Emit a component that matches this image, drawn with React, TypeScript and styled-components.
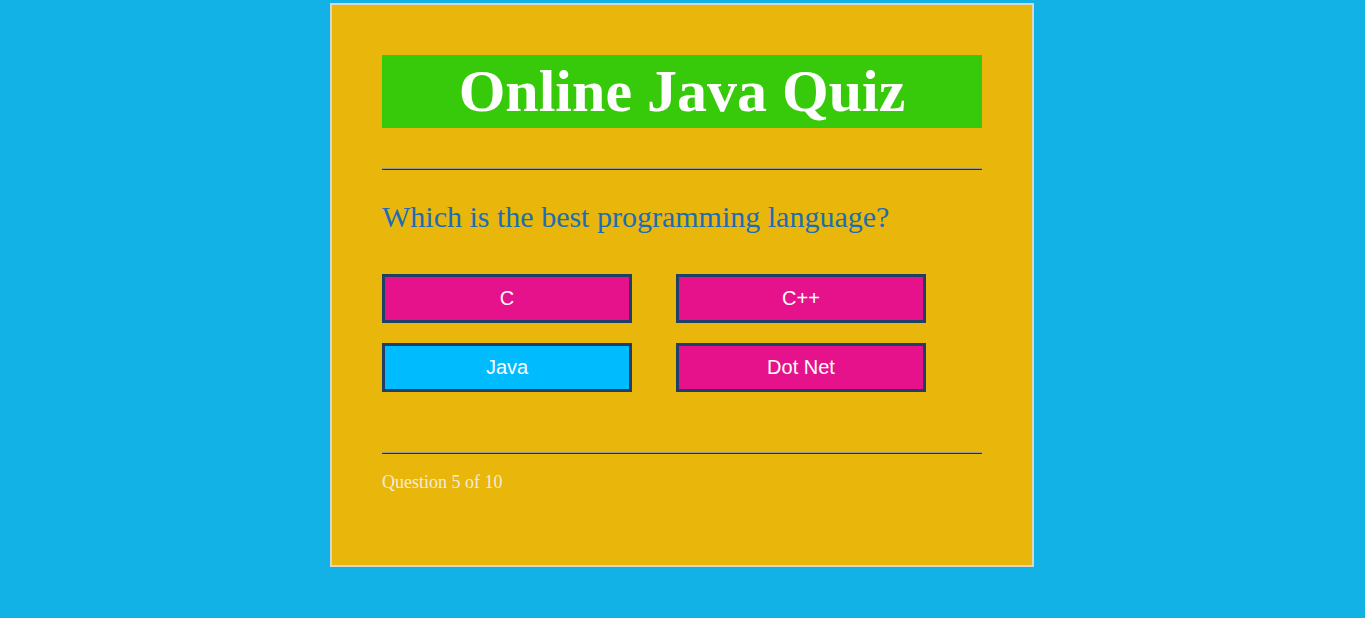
import React from "react";
import styled, { createGlobalStyle } from "styled-components";

const Global = createGlobalStyle`
  html, body {
    margin: 0;
    padding: 0;
    background: #12b2e6;
  }
  body {
    font-family: "Liberation Serif", "Times New Roman", serif;
  }
`;

const Page = styled.div`
  display: flex;
  justify-content: center;
  padding: 3px 1px 0 0;
`;

const Card = styled.div`
  width: 600px;
  padding: 50px 50px 73px;
  background: #e9b60c;
  border: 2px solid #d9d6cc;
  display: flex;
  flex-direction: column;
`;

const Title = styled.h1`
  margin: 0;
  height: 73px;
  line-height: 73px;
  background: #36ca0a;
  color: #ffffff;
  font-family: "Liberation Serif", "Times New Roman", serif;
  font-weight: bold;
  font-size: 60px;
  text-align: center;
`;

const Rule = styled.hr<{ $top: number }>`
  margin: ${(p) => p.$top}px 0 0;
  height: 0;
  border: none;
  border-top: 1px solid #9c9a94;
  border-bottom: 1px solid #2f3338;
`;

const Question = styled.p`
  margin: 30px 0 0;
  font-size: 30px;
  line-height: 34px;
  color: #1c6db4;
`;

const Options = styled.div`
  margin-top: 40px;
  display: grid;
  grid-template-columns: 250px 250px;
  column-gap: 44px;
  row-gap: 20px;
`;

const Option = styled.button<{ $selected?: boolean }>`
  box-sizing: border-box;
  width: 250px;
  height: 49px;
  margin: 0;
  padding: 0;
  border: 3px solid #1f3f66;
  background: ${(p) => (p.$selected ? "#00bbfe" : "#e6128c")};
  color: #ffffff;
  font-family: "Liberation Sans", Arial, sans-serif;
  font-size: 20px;
  line-height: 23px;
  cursor: pointer;
`;

const Footer = styled.p`
  margin: 18px 0 0;
  font-size: 18px;
  line-height: 20px;
  color: #f3ecdc;
`;

const options = [
  { label: "C", selected: false },
  { label: "C++", selected: false },
  { label: "Java", selected: true },
  { label: "Dot Net", selected: false },
];

export default function App() {
  return (
    <>
      <Global />
      <Page>
        <Card>
          <Title>Online Java Quiz</Title>
          <Rule $top={40} />
          <Question>Which is the best programming language?</Question>
          <Options>
            {options.map((o) => (
              <Option key={o.label} $selected={o.selected}>
                {o.label}
              </Option>
            ))}
          </Options>
          <Rule $top={60} />
          <Footer>Question 5 of 10</Footer>
        </Card>
      </Page>
    </>
  );
}
